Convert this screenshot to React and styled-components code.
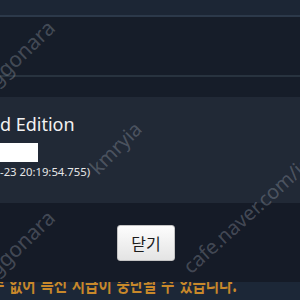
import styled, { createGlobalStyle } from "styled-components";

const GlobalStyle = createGlobalStyle`
    body {
        margin: 0;
        background: #1c2737;
        font-family: "Noto Sans", "Noto Sans CJK KR", sans-serif;
    }
`;

const Page = styled.div`
    position: relative;
    width: 300px;
    height: 300px;
    overflow: hidden;
    display: flex;
    flex-direction: column;
`;

const TopBar = styled.div`
    height: 15px;
    background: #1c2635;
`;

const Divider = styled.div`
    height: 2px;
    background: ${({ $tone }) => $tone};
`;

const Panel = styled.div`
    height: ${({ $h }) => $h}px;
    background: #161d29;
`;

const DialogBody = styled.div`
    height: 106px;
    box-sizing: border-box;
    padding-top: 16px;
    background: #212936;
    display: flex;
    flex-direction: column;
    align-items: flex-start;
`;

const Title = styled.div`
    font-size: 18px;
    line-height: 22px;
    color: #f2f2f2;
    white-space: nowrap;
`;

const Redacted = styled.div`
    width: 38px;
    height: 19px;
    margin-top: 8px;
    background: #ffffff;
`;

const Stamp = styled.div`
    margin-top: 3px;
    font-size: 11.3px;
    line-height: 14px;
    color: #e6e6e6;
    white-space: nowrap;
`;

const DialogFooter = styled.div`
    height: 79px;
    background: #151b27;
    display: flex;
    align-items: center;
    justify-content: center;
    padding-right: 8px;
`;

const CloseButton = styled.button`
    width: 58px;
    height: 36px;
    border: 1px solid #c4c4c4;
    border-radius: 3px;
    background: linear-gradient(#fdfdfd, #e4e4e4);
    color: #1b1b1b;
    font-family: "Noto Sans CJK KR", sans-serif;
    font-size: 16px;
    cursor: pointer;
`;

const Notice = styled.div`
    flex: 1;
    overflow: hidden;
    background: #1c2737;
`;

const NoticeText = styled.div`
    margin: -8px 0 0 -9px;
    font-family: "Noto Sans CJK KR", sans-serif;
    font-size: 19px;
    font-weight: 700;
    line-height: 20px;
    word-spacing: 2px;
    color: #c8882a;
    white-space: nowrap;
    transform: scaleX(0.76);
    transform-origin: 0 0;
`;

const Watermark = styled.span`
    position: absolute;
    left: ${({ $x }) => $x}px;
    top: ${({ $y }) => $y}px;
    font-family: "Noto Sans", sans-serif;
    font-size: ${({ $size }) => $size}px;
    line-height: 1;
    color: rgba(200, 205, 215, 0.27);
    white-space: nowrap;
    transform-origin: 0 100%;
    transform: rotate(${({ $angle }) => $angle}deg);
    pointer-events: none;
`;

const App = () => {
    return (
        <>
            <GlobalStyle />
            <Page>
                <TopBar />
                <Divider $tone="#2c394a" />
                <Panel $h={58} />
                <Divider $tone="#28333f" />
                <Panel $h={20} />
                <DialogBody>
                    <Title>d Edition</Title>
                    <Redacted />
                    <Stamp>-23 20:19:54.755)</Stamp>
                </DialogBody>
                <DialogFooter>
                    <CloseButton>닫기</CloseButton>
                </DialogFooter>
                <Notice>
                    <NoticeText>수 없어 특전 지급이 중단될 수 있습니다.</NoticeText>
                </Notice>
                <Watermark $x={-33} $y={99} $size={21} $angle={-44}>joonggonara</Watermark>
                <Watermark $x={-33} $y={289} $size={21} $angle={-44}>joonggonara</Watermark>
                <Watermark $x={100} $y={158} $size={20} $angle={-45}>kmryia</Watermark>
                <Watermark $x={193} $y={257} $size={20} $angle={-42}>cafe.naver.com/joonggonara</Watermark>
            </Page>
        </>
    );
};

export default App;
